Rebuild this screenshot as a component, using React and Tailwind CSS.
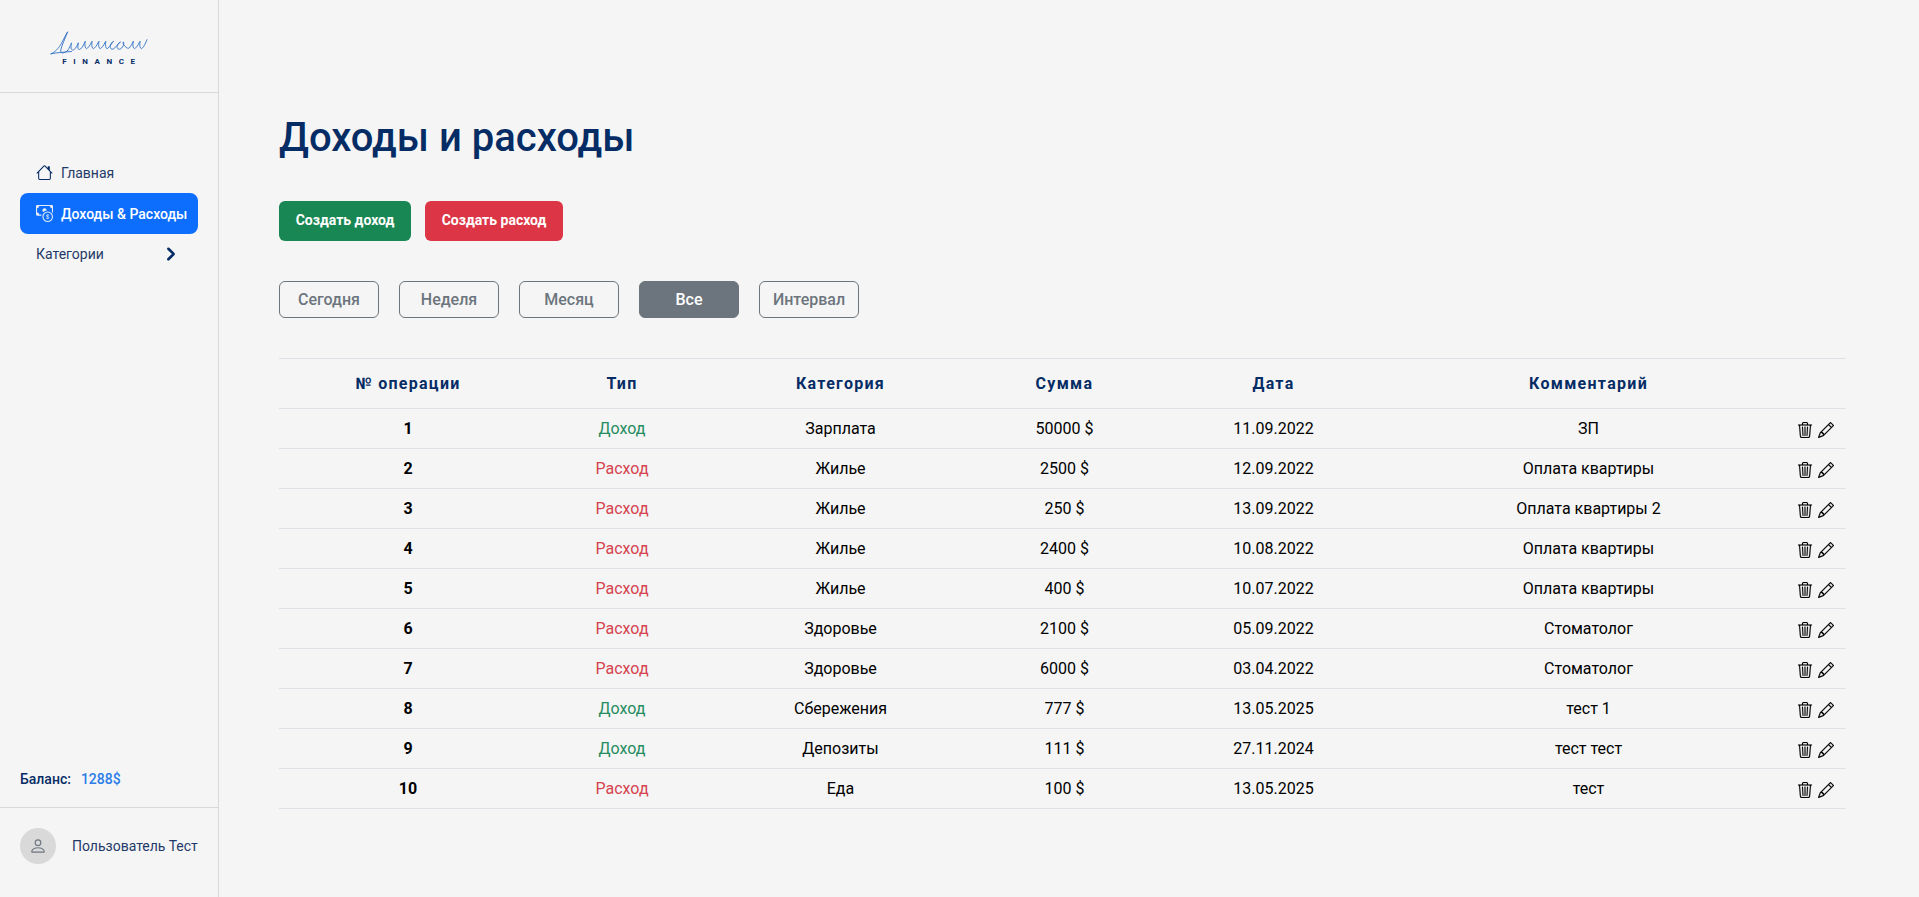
import React from "react";
import { BsHouse, BsCashCoin, BsChevronRight, BsPerson, BsTrash3, BsPencil } from "react-icons/bs";

const rows = [
  [1, "Доход", "Зарплата", "50000 $", "11.09.2022", "ЗП"],
  [2, "Расход", "Жилье", "2500 $", "12.09.2022", "Оплата квартиры"],
  [3, "Расход", "Жилье", "250 $", "13.09.2022", "Оплата квартиры 2"],
  [4, "Расход", "Жилье", "2400 $", "10.08.2022", "Оплата квартиры"],
  [5, "Расход", "Жилье", "400 $", "10.07.2022", "Оплата квартиры"],
  [6, "Расход", "Здоровье", "2100 $", "05.09.2022", "Стоматолог"],
  [7, "Расход", "Здоровье", "6000 $", "03.04.2022", "Стоматолог"],
  [8, "Доход", "Сбережения", "777 $", "13.05.2025", "тест 1"],
  [9, "Доход", "Депозиты", "111 $", "27.11.2024", "тест тест"],
  [10, "Расход", "Еда", "100 $", "13.05.2025", "тест"],
];

const heads = ["№ операции", "Тип", "Категория", "Сумма", "Дата", "Комментарий", ""];
const filters = ["Сегодня", "Неделя", "Месяц", "Все", "Интервал"];

function Logo() {
  return (
    <div className="flex flex-col items-center">
      <svg width="98" height="26" viewBox="0 0 100 33" preserveAspectRatio="none" fill="none" stroke="#2f6fc4" strokeWidth="1" strokeLinecap="round" strokeLinejoin="round">
        <path d="M1 29 C5 27 9 22 12 15 C14 10 16 5 18 1 C16 8 12 18 11 24 C10 29 14 29 18 25" />
        <path d="M1 29 C8 27 15 27 22 26" />
        <path d="M18 25 C20 21 22 15 22 15 C21 20 21 25 24 24 C27 22 28 17 29 15 C28 20 28 25 31 23 C34 20 35 15 36 13 C35 18 36 24 38 22 C41 19 42 14 43 13 C42 18 43 24 45 22 C48 19 49 14 50 13 C49 18 50 24 52 22 C55 19 56 14 57 13 C56 18 57 24 59 22 C61 20 63 15 65 13 C62 14 60 22 63 23 C66 24 68 17 72 14 C69 15 67 22 70 23 C73 24 76 18 75 14 C73 14 77 22 80 22 C83 20 84 15 85 13 C84 18 85 24 87 22 C90 19 91 14 92 13 C91 18 92 24 94 22 C96 20 98 14 99 11" />
      </svg>
      <div className="font-['Roboto',sans-serif] font-bold text-[8px] leading-[10px] tracking-[6.6px] pl-[6px] text-[#052c65]">FINANCE</div>
    </div>
  );
}

function Sidebar() {
  return (
    <aside className="w-[219px] shrink-0 h-[897px] border-r border-[#d9d9d9] flex flex-col text-sm text-[#1f3a68]">
      <div className="h-[93px] shrink-0 border-b border-[#d9d9d9] flex items-center pl-[50px] pt-[5px]">
        <Logo />
      </div>
      <nav className="mt-[59px] px-[20px] flex flex-col">
        <a className="h-[41px] flex items-center gap-[8px] pl-[16px] rounded-lg">
          <BsHouse className="w-[17px] h-[17px] text-[#052c65]" />
          <span>Главная</span>
        </a>
        <a className="h-[41px] flex items-center gap-[8px] pl-[16px] rounded-lg bg-[#0d6efd] text-white font-medium">
          <BsCashCoin className="w-[17px] h-[17px] text-[#e6edf7]" />
          <span>Доходы &amp; Расходы</span>
        </a>
        <a className="h-[40px] flex items-center justify-between pl-[16px] pr-[20px]">
          <span>Категории</span>
          <BsChevronRight className="w-[14px] h-[14px] text-[#052c65] stroke-[2px]" />
        </a>
      </nav>
      <div className="mt-auto px-[20px] h-[38px] flex items-start gap-[10px] font-medium text-[#052c65]">
        <span>Баланс:</span>
        <span className="text-[#2b7de9]">1288$</span>
      </div>
      <div className="h-[90px] shrink-0 border-t border-[#d9d9d9] flex items-start px-[20px] gap-[16px] pt-[20px]">
        <div className="w-[36px] h-[36px] rounded-full bg-[#d9d9d9] flex items-center justify-center">
          <BsPerson className="w-[18px] h-[18px] text-[#6c757d]" />
        </div>
        <span className="leading-[36px]">Пользователь Тест</span>
      </div>
    </aside>
  );
}

function Table() {
  const widths = ["w-[258px]", "w-[170px]", "w-[267px]", "w-[181px]", "w-[237px]", "w-[393px]", "w-[61px]"];
  return (
    <table className="w-[1567px] table-fixed border-collapse border-t border-[#dee2e6]">
      <colgroup>
        {widths.map((w, i) => <col key={i} className={w} />)}
      </colgroup>
      <thead>
        <tr className="h-[50px] border-b border-[#dee2e6]">
          {heads.map((h, i) => (
            <th key={i} className="text-center text-[#052c65] font-bold text-[16px] tracking-[1.28px]">{h}</th>
          ))}
        </tr>
      </thead>
      <tbody>
        {rows.map((r) => (
          <tr key={r[0]} className="h-[40px] border-b border-[#dee2e6] text-[16px] text-black">
            <td className="text-center font-bold">{r[0]}</td>
            <td className={"text-center " + (r[1] === "Доход" ? "text-[#258c5f]" : "text-[#d4434f]")}>{r[1]}</td>
            <td className="text-center">{r[2]}</td>
            <td className="text-center">{r[3]}</td>
            <td className="text-center">{r[4]}</td>
            <td className="text-center">{r[5]}</td>
            <td>
              <div className="flex items-center gap-[5px] pt-[2px] pl-[12px] text-black">
                <BsTrash3 className="w-[16px] h-[16px] stroke-[0.15px]" />
                <BsPencil className="w-[16px] h-[16px] stroke-[0.2px]" />
              </div>
            </td>
          </tr>
        ))}
      </tbody>
    </table>
  );
}

export default function App() {
  return (
    <div className="w-[1919px] h-[897px] overflow-hidden flex bg-[#f5f5f5] font-['Roboto',sans-serif]">
      <Sidebar />
      <main className="flex-1 pl-[60px] pt-[108px]">
        <h1 className="text-[40px] leading-[60px] font-medium text-[#052c65]">Доходы и расходы</h1>
        <div className="mt-[33px] flex gap-[14px]">
          <button className="w-[132px] h-[40px] pb-[2px] rounded-md bg-[#198754] text-white text-[14px] font-bold">Создать доход</button>
          <button className="w-[138px] h-[40px] pb-[2px] rounded-md bg-[#dc3545] text-white text-[14px] font-bold">Создать расход</button>
        </div>
        <div className="mt-[40px] flex gap-[20px]">
          {filters.map((f) => (
            <button
              key={f}
              className={
                "w-[100px] h-[37px] rounded-md border border-[#6c757d] font-medium text-[16px] " +
                (f === "Все" ? "bg-[#6c757d] text-white" : "text-[#6c757d]")
              }
            >
              {f}
            </button>
          ))}
        </div>
        <div className="mt-[40px]">
          <Table />
        </div>
      </main>
    </div>
  );
}
